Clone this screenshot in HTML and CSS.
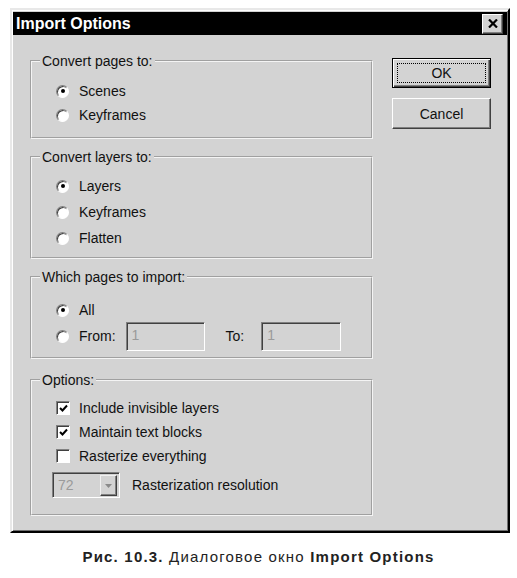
FILE: index.html
```html
<!DOCTYPE html>
<html lang="en">
<head>
    <meta charset="UTF-8">
    <title>Import Options</title>
    <link rel="stylesheet" href="styles.css">
</head>
<body>

    <div class="window">
        <div class="titlebar">
            <span class="title">Import Options</span>
            <span class="close-btn">
                <svg width="10" height="9" viewBox="0 0 10 9"><path d="M1 0.5 L9 8.5 M9 0.5 L1 8.5" stroke="#000" stroke-width="2.2"/></svg>
            </span>
        </div>

        <div class="content">
            <div class="groups">
                <fieldset class="group g1">
                    <legend>Convert pages to:</legend>
                    <div class="row"><span class="radio checked"></span>Scenes</div>
                    <div class="row"><span class="radio"></span>Keyframes</div>
                </fieldset>

                <fieldset class="group g2">
                    <legend>Convert layers to:</legend>
                    <div class="row"><span class="radio checked"></span>Layers</div>
                    <div class="row"><span class="radio"></span>Keyframes</div>
                    <div class="row"><span class="radio"></span>Flatten</div>
                </fieldset>

                <fieldset class="group g3">
                    <legend>Which pages to import:</legend>
                    <div class="row"><span class="radio checked"></span>All</div>
                    <div class="row">
                        <span class="radio"></span>From:
                        <span class="field from">1</span>
                        <span class="to-label">To:</span>
                        <span class="field to">1</span>
                    </div>
                </fieldset>

                <fieldset class="group g4">
                    <legend>Options:</legend>
                    <div class="row"><span class="check checked"><svg width="9" height="9" viewBox="0 0 9 9"><path d="M1 4 L3.5 6.5 L8 1.5" fill="none" stroke="#000" stroke-width="2"/></svg></span>Include invisible layers</div>
                    <div class="row"><span class="check checked"><svg width="9" height="9" viewBox="0 0 9 9"><path d="M1 4 L3.5 6.5 L8 1.5" fill="none" stroke="#000" stroke-width="2"/></svg></span>Maintain text blocks</div>
                    <div class="row"><span class="check"></span>Rasterize everything</div>
                    <div class="row res-row">
                        <span class="select">
                            <span class="select-value">72</span>
                            <span class="select-btn">
                                <svg width="7" height="4" viewBox="0 0 7 4"><path d="M0 0 H7 L3.5 4 Z" fill="#8a8a8a"/></svg>
                            </span>
                        </span>
                        Rasterization resolution
                    </div>
                </fieldset>
            </div>

            <div class="buttons">
                <button class="btn btn-default"><span class="focus">OK</span></button>
                <button class="btn">Cancel</button>
            </div>
        </div>
    </div>

    <p class="caption"><b>Рис. 10.3.</b> Диалоговое окно <b>Import Options</b></p>

</body>
</html>
```

FILE: styles.css
```css
body {
    margin: 0;
    background: #fff;
    font-family: "Liberation Sans", Arial, sans-serif;
    font-size: 14px;
    color: #111;
}

/* Dialog window */
.window {
    box-sizing: border-box;
    width: 500px;
    height: 525px;
    margin: 8px 0 0 10px;
    padding: 2px 1px;
    background: #d3d3d3;
    border: 2px solid;
    border-color: #e8e8e8 #000 #000 #e8e8e8;
    box-shadow: inset 1px 1px 0 #fff, inset -1px -1px 0 #707070;
}

.titlebar {
    height: 23px;
    background: #000;
    display: flex;
    align-items: center;
    justify-content: space-between;
    padding: 0 4px 0 3px;
}

.title {
    color: #fff;
    font-weight: bold;
    font-size: 16px;
}

.close-btn {
    box-sizing: border-box;
    width: 21px;
    height: 20px;
    display: flex;
    align-items: center;
    justify-content: center;
    background: #d3d3d3;
    border: 1px solid;
    border-color: #fff #404040 #404040 #fff;
    box-shadow: inset -1px -1px 0 #808080;
}

.content {
    display: flex;
    padding: 18px 0 0 17px;
}

.groups {
    width: 343px;
    display: flex;
    flex-direction: column;
    gap: 10px;
}

/* Group boxes */
.group {
    box-sizing: border-box;
    margin: 0;
    padding: 0 0 0 24px;
    border: 2px groove #f4f4f4;
}

.group legend {
    padding: 0 2px;
    margin-left: -16px;
    line-height: 16px;
}

.g1 { height: 86px; padding-top: 10px; }
.g2 { height: 110px; padding-top: 8px; }
.g2 .row { height: 26px; }
.g3 { height: 90px; padding-top: 12px; }
.g3 .row { height: 26px; }
.g4 { height: 144px; padding-top: 8px; margin-top: 3px; }

.row {
    height: 24px;
    display: flex;
    align-items: center;
}

/* Radio buttons */
.radio {
    box-sizing: border-box;
    width: 13px;
    height: 13px;
    margin-right: 10px;
    border-radius: 50%;
    background: #fff;
    border: 1px solid;
    border-color: #808080 #fff #fff #808080;
    box-shadow: inset 1px 1px 0 #404040;
    display: inline-flex;
    align-items: center;
    justify-content: center;
}

.radio.checked::after {
    content: '';
    width: 4px;
    height: 4px;
    border-radius: 50%;
    background: #000;
}

/* Checkboxes */
.check {
    box-sizing: border-box;
    width: 14px;
    height: 14px;
    margin-right: 9px;
    background: #fff;
    border: 1px solid;
    border-color: #808080 #fff #fff #808080;
    box-shadow: inset 1px 1px 0 #404040;
    display: inline-flex;
    align-items: center;
    justify-content: center;
}

/* Text fields */
.field {
    box-sizing: border-box;
    height: 29px;
    padding: 4px 0 0 5px;
    color: #9a9a9a;
    background: #d3d3d3;
    border: 1px solid;
    border-color: #808080 #fff #fff #808080;
    box-shadow: inset 1px 1px 0 #404040;
}

.from {
    width: 79px;
    margin-left: 10px;
}

.to-label {
    margin: 0 17px 0 21px;
}

.to {
    width: 80px;
}

.res-row {
    height: 26px;
    margin-top: 4px;
}

.select {
    box-sizing: border-box;
    width: 68px;
    height: 26px;
    margin: 0 12px 0 -4px;
    display: flex;
    align-items: stretch;
    background: #d3d3d3;
    border: 1px solid;
    border-color: #808080 #fff #fff #808080;
    box-shadow: inset 1px 1px 0 #404040;
    padding: 2px 2px 1px 2px;
}

.select-value {
    flex: 1;
    color: #9a9a9a;
    padding: 2px 0 0 3px;
}

.select-btn {
    box-sizing: border-box;
    width: 17px;
    display: flex;
    align-items: center;
    justify-content: center;
    background: #d3d3d3;
    border: 1px solid;
    border-color: #f0f0f0 #404040 #404040 #f0f0f0;
    box-shadow: inset -1px -1px 0 #808080;
}

/* Buttons */
.buttons {
    display: flex;
    flex-direction: column;
    gap: 10px;
    margin: 5px 0 0 19px;
}

.btn {
    box-sizing: border-box;
    width: 99px;
    height: 31px;
    padding: 0;
    font-family: inherit;
    font-size: 14px;
    color: #111;
    background: #d3d3d3;
    border: 1px solid;
    border-color: #fff #404040 #404040 #fff;
    box-shadow: inset -1px -1px 0 #808080;
}

.btn-default {
    height: 30px;
    border: 1px solid #000;
    box-shadow: inset 1px 1px 0 #fff, inset -1px -1px 0 #404040, inset -2px -2px 0 #808080;
    display: flex;
    padding: 4px;
}

.focus {
    flex: 1;
    display: flex;
    align-items: center;
    justify-content: center;
    border: 1px dotted #000;
}

/* Figure caption */
.caption {
    margin: 15px 0 0;
    text-align: center;
    font-size: 15px;
    letter-spacing: 1.2px;
    color: #222;
}
```
